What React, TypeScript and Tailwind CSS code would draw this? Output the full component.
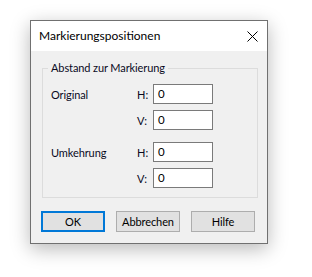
import React from "react";

const font = { fontFamily: 'Lato, "Noto Sans", sans-serif' };

function Field({ value }: { value: string }) {
  return (
    <div className="w-[60px] h-[20px] border border-[#7a7a7a] bg-white flex items-center pl-[4px] text-[11.5px] text-black leading-none">
      {value}
    </div>
  );
}

function Row({ label, axis }: { label?: string; axis: string }) {
  return (
    <div className="flex items-center h-[20px]">
      <div className="w-[86px] text-[11px] tracking-[-0.1px] text-[#0a0a1e] leading-none">{label ?? ""}</div>
      <div className="w-[16px] text-[11px] text-[#0a0a1e] leading-none">{axis}:</div>
      <Field value="0" />
    </div>
  );
}

function Btn({ children, focused }: { children: React.ReactNode; focused?: boolean }) {
  return (
    <div
      className={
        "w-[64px] h-[21px] flex items-center justify-center bg-[#e1e1e1] text-[11px] tracking-[-0.1px] text-black leading-none " +
        (focused ? "border-2 border-[#0078d7]" : "border border-[#adadad]")
      }
    >
      {children}
    </div>
  );
}

export default function App() {
  return (
    <div className="w-[312px] h-[277px] bg-white pt-[20px] pl-[30px]" style={font}>
      <div className="w-[238px] h-[224px] border border-[#707070] bg-[#f0f0f0] shadow-[0_5px_18px_rgba(0,0,0,0.28)] flex flex-col">
        <div className="h-[30px] bg-white flex items-center justify-between pl-[8px] pr-[9px]">
          <span className="text-[12px] text-black leading-none">Markierungspositionen</span>
          <svg width="11" height="11" viewBox="0 0 11 11">
            <path d="M0.5 0.5 L10.5 10.5 M10.5 0.5 L0.5 10.5" stroke="#000" strokeWidth="1" fill="none" />
          </svg>
        </div>
        <div className="pl-[11px] pt-[17px]">
          <div className="relative w-[216px] h-[130px] border border-[#dcdcdc] pl-[8px] pt-[15px]">
            <span className="absolute left-[5px] top-[-8px] px-[3px] bg-[#f0f0f0] text-[11px] tracking-[-0.1px] leading-[14px] text-[#0a0a1e]">
              Abstand zur Markierung
            </span>
            <div className="flex flex-col gap-[6px]">
              <Row label="Original" axis="H" />
              <Row axis="V" />
            </div>
            <div className="flex flex-col gap-[6px] mt-[12px]">
              <Row label="Umkehrung" axis="H" />
              <Row axis="V" />
            </div>
          </div>
          <div className="flex gap-[11px] mt-[13px] -ml-[1px]">
            <Btn focused>OK</Btn>
            <Btn>Abbrechen</Btn>
            <Btn>Hilfe</Btn>
          </div>
        </div>
      </div>
    </div>
  );
}
